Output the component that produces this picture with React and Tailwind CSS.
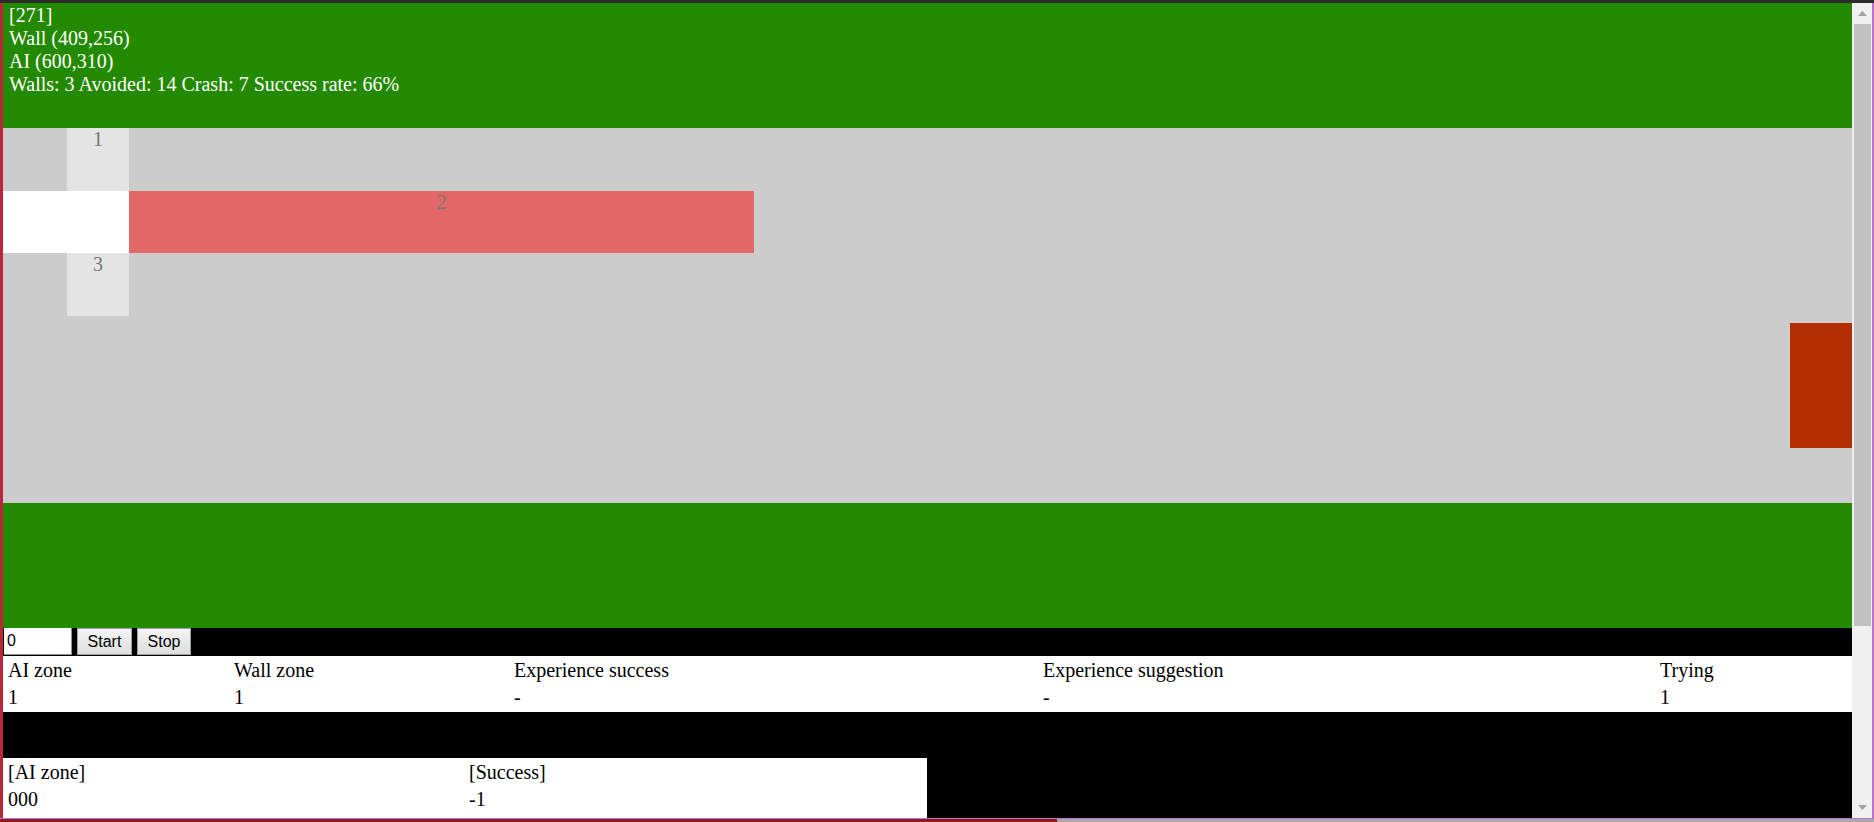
const stats = {
  tick: 271,
  wall: '409,256',
  ai: '600,310',
  walls: 3,
  avoided: 14,
  crash: 7,
  rate: 66,
};

const columns = [
  { label: 'AI zone', value: '1' },
  { label: 'Wall zone', value: '1' },
  { label: 'Experience success', value: '-' },
  { label: 'Experience suggestion', value: '-' },
  { label: 'Trying', value: '1' },
];

const Arrow = ({ up }) => (
  <svg width="9" height="5" viewBox="0 0 9 5">
    <polygon points={up ? '4.5,0 9,5 0,5' : '0,0 9,0 4.5,5'} fill="#a3a3a3" />
  </svg>
);

const Scrollbar = () => (
  <div className="w-[20px] flex flex-col bg-[#f0f0f0]">
    <div className="h-[21px] flex items-center justify-center pl-[1px]">
      <Arrow up />
    </div>
    <div className="ml-[2px] w-[17px] h-[602px] bg-[#c1c1c1]" />
    <div className="flex-1" />
    <div className="h-[21px] flex items-center justify-center pl-[1px]">
      <Arrow />
    </div>
  </div>
);

const Lanes = () => (
  <div className="relative h-[375px] bg-[#cccccc] text-[#777777] text-center">
    {/* lane 1 */}
    <div className="h-[62.5px] flex">
      <div className="ml-[64px] w-[62px] bg-[#e4e4e4]">1</div>
    </div>
    {/* lane 2 with wall */}
    <div className="h-[62.5px] flex">
      <div className="w-[126px] bg-white" />
      <div className="w-[625px] bg-[#e46767]">2</div>
    </div>
    {/* lane 3 */}
    <div className="h-[62.5px] flex">
      <div className="ml-[64px] w-[62px] bg-[#e4e4e4]">3</div>
    </div>
    <div className="h-[62.5px]" />
    <div className="h-[62.5px]" />
    <div className="h-[62.5px]" />

    {/* AI car */}
    <div className="absolute left-[1787px] top-[195px] w-[62px] h-[125px] bg-[#b32d00]" />
  </div>
);

export default function App() {
  return (
    <div className="w-[1874px] h-[822px] overflow-hidden bg-[#a8a8a8] font-['Liberation_Serif',serif] text-[20px] leading-[23px]">
      <div className="h-[3px] bg-[#2b2b2b]" />
      <div className="h-[815px] flex">
        <div className="w-[3px] bg-[#b8283a]" />

        <div className="w-[1849px] flex flex-col bg-black">
          {/* Top info */}
          <div className="h-[125px] bg-[#238a00] text-white pl-[6px] pt-[1px]">
            <div>[{stats.tick}]</div>
            <div>Wall ({stats.wall})</div>
            <div>AI ({stats.ai})</div>
            <div>
              Walls: {stats.walls} Avoided: {stats.avoided} Crash: {stats.crash} Success rate: {stats.rate}%
            </div>
          </div>

          <Lanes />

          <div className="h-[125px] bg-[#238a00]" />

          {/* Controls */}
          <div className="h-[28px] flex items-start gap-[5px] font-['Liberation_Sans',Arial,sans-serif] text-[16px] leading-[20px]">
            <input
              value="0"
              readOnly
              className="ml-[1px] w-[68px] h-[27px] bg-white text-black pl-[3px] border-r border-b border-[#8f8f8f] outline-none"
            />
            <button className="w-[55px] h-[27px] bg-gradient-to-b from-[#f4f4f4] to-[#dedede] border border-[#a0a0a0] text-black">
              Start
            </button>
            <button className="w-[54px] h-[27px] bg-gradient-to-b from-[#f4f4f4] to-[#dedede] border border-[#a0a0a0] text-black">
              Stop
            </button>
          </div>

          {/* Status table */}
          <div className="h-[56px] bg-white text-black pl-[5px] pt-[3px] grid grid-cols-[226px_280px_529px_617px_1fr] gap-y-[4px] content-start">
            {columns.map((c) => (
              <div key={c.label}>{c.label}</div>
            ))}
            {columns.map((c) => (
              <div key={c.label + '-v'}>{c.value}</div>
            ))}
          </div>

          <div className="h-[46px]" />

          {/* Experience table */}
          <div className="h-[60px] w-[924px] bg-white text-black pl-[5px] pt-[3px] grid grid-cols-[461px_1fr] gap-y-[4px] content-start">
            <div>[AI zone]</div>
            <div>[Success]</div>
            <div>000</div>
            <div>-1</div>
          </div>
        </div>

        <Scrollbar />
        <div className="w-[2px] bg-[#c070d0]" />
      </div>
      <div className="h-[1px] bg-[#c070d0]" />
      <div className="h-[3px] flex">
        <div className="w-[1057px] bg-[#8a1c1c]" />
        <div className="flex-1 bg-[#a8a8a8]" />
      </div>
    </div>
  );
}
